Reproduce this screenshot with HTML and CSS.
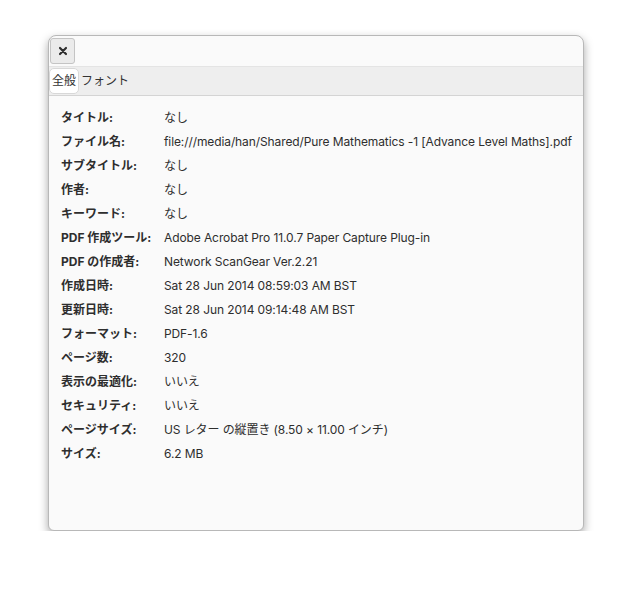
FILE: index.html
```html
<!DOCTYPE html>
<html lang="ja">
<head>
<meta charset="utf-8">
<link rel="stylesheet" href="styles.css">
</head>
<body>
<div class="window">
  <div class="titlebar">
    <button class="close" aria-label="閉じる">
      <svg width="10" height="10" viewBox="0 0 10 10"><path d="M2 2 L8 8 M8 2 L2 8" stroke="#2e2e2e" stroke-width="2.2" stroke-linecap="round"/></svg>
    </button>
  </div>
  <div class="tabs">
    <span class="tab active">全般</span>
    <span class="tab">フォント</span>
  </div>
  <div class="props">
    <div class="k">タイトル:</div><div class="v">なし</div>
    <div class="k">ファイル名:</div><div class="v">file:///media/han/Shared/Pure Mathematics -1 [Advance Level Maths].pdf</div>
    <div class="k">サブタイトル:</div><div class="v">なし</div>
    <div class="k">作者:</div><div class="v">なし</div>
    <div class="k">キーワード:</div><div class="v">なし</div>
    <div class="k">PDF 作成ツール:</div><div class="v">Adobe Acrobat Pro 11.0.7 Paper Capture Plug-in</div>
    <div class="k">PDF の作成者:</div><div class="v">Network ScanGear Ver.2.21</div>
    <div class="k">作成日時:</div><div class="v">Sat 28 Jun 2014 08:59:03 AM BST</div>
    <div class="k">更新日時:</div><div class="v">Sat 28 Jun 2014 09:14:48 AM BST</div>
    <div class="k">フォーマット:</div><div class="v">PDF-1.6</div>
    <div class="k">ページ数:</div><div class="v">320</div>
    <div class="k">表示の最適化:</div><div class="v">いいえ</div>
    <div class="k">セキュリティ:</div><div class="v">いいえ</div>
    <div class="k">ページサイズ:</div><div class="v">US レター の縦置き (8.50 × 11.00 インチ)</div>
    <div class="k">サイズ:</div><div class="v">6.2 MB</div>
  </div>
</div>
</body>
</html>
```
FILE: styles.css
```css
html, body {
  margin: 0;
  padding: 0;
  background: #ffffff;
}
body {
  font-family: Inter, "Noto Sans CJK JP", sans-serif;
  color: #2e2e2e;
  font-size: 12px;
}
.window {
  margin: 35px 0 0 48px;
  width: 536px;
  height: 496px;
  box-sizing: border-box;
  background: #fafafa;
  border: 1px solid #b8b8b8;
  border-radius: 8px 8px 6px 6px;
  box-shadow: 0 4px 10px rgba(0, 0, 0, 0.35);
  overflow: hidden;
  display: flex;
  flex-direction: column;
}
.titlebar {
  height: 30px;
  padding: 2px 0 0 1px;
  box-sizing: border-box;
  display: flex;
  align-items: flex-start;
}
.close {
  width: 25px;
  height: 26px;
  padding: 0;
  border: 1px solid #c4c4c4;
  border-radius: 3px;
  background: #ebebeb;
  display: flex;
  align-items: center;
  justify-content: center;
}
.tabs {
  height: 30px;
  box-sizing: border-box;
  background: #eeeeee;
  border-top: 1px solid #e4e4e4;
  border-bottom: 1px solid #d4d4d4;
  display: flex;
  align-items: center;
  font-size: 12px;
}
.tab {
  padding: 0 1px;
  line-height: 24px;
  color: #333;
}
.tab.active {
  background: #ffffff;
  border: 1px solid #d8d8d8;
  border-radius: 5px;
  padding: 0 2px;
  margin-right: 1px;
}
.props {
  display: grid;
  grid-template-columns: 103px auto;
  padding: 10px 0 0 12px;
}
.k, .v {
  line-height: 24px;
  white-space: nowrap;
}
.v {
  letter-spacing: -0.1px;
}
.k {
  font-weight: 700;
}
```
